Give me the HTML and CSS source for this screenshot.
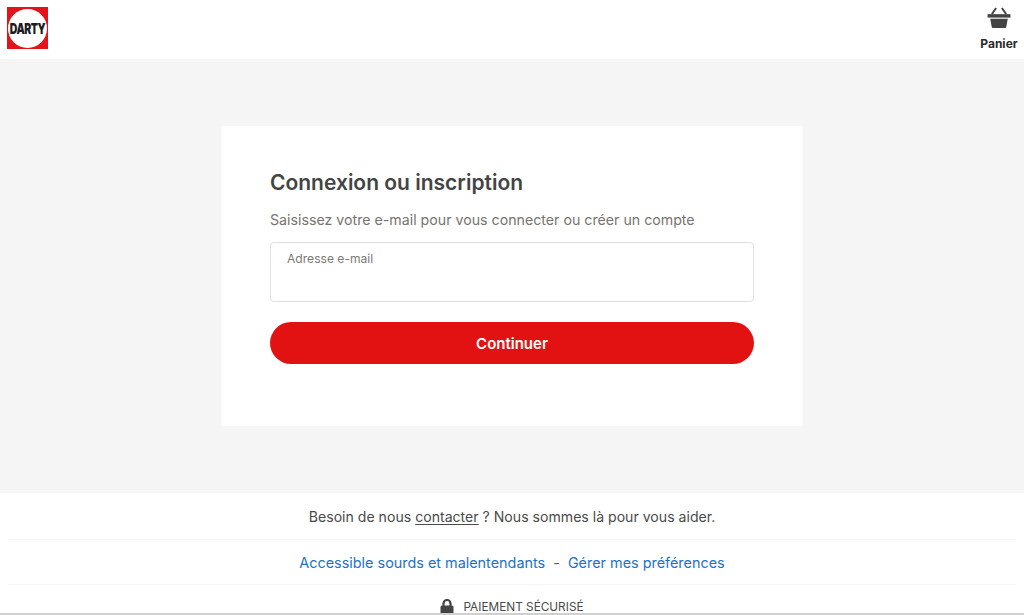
FILE: index.html
```html
<!DOCTYPE html>
<html lang="fr">
<head>
    <meta charset="UTF-8">
    <meta name="viewport" content="width=device-width, initial-scale=1.0">
    <title>Connexion ou inscription</title>
    <link rel="stylesheet" href="styles.css">
</head>
<body>
    <div class="header">
        <a class="logo" href="#">
            <span class="logo-disc"><span class="logo-text">DARTY</span></span>
        </a>
        <a class="basket" href="#">
            <svg class="basket-icon" width="26" height="21" viewBox="0 0 26 22">
                <path d="M10 1 L5.5 7.5 M16 1 L20.5 7.5" fill="none" stroke="#444" stroke-width="2"/>
                <rect x="1" y="7.5" width="24" height="3.6" fill="#444"/>
                <path d="M3.8 12.2 H22.2 L20.6 21 Q20.5 22 19.4 22 H6.6 Q5.5 22 5.4 21 Z" fill="#444"/>
            </svg>
            <span class="basket-label">Panier</span>
        </a>
    </div>

    <div class="main-area">
        <div class="card">
            <h1>Connexion ou inscription</h1>
            <p class="intro">Saisissez votre e-mail pour vous connecter ou créer un compte</p>
            <div class="field">
                <label for="email">Adresse e-mail</label>
                <input id="email" type="email">
            </div>
            <button class="continue-button">Continuer</button>
        </div>
    </div>

    <div class="footer">
        <div class="footer-row">Besoin de nous <a class="contact" href="#">contacter</a> ? Nous sommes là pour vous aider.</div>
        <div class="footer-row links">
            <a href="#">Accessible sourds et malentendants</a>
            <span class="sep">-</span>
            <a href="#">Gérer mes préférences</a>
        </div>
        <div class="secure">
            <svg width="14" height="16" viewBox="0 0 14 16">
                <path d="M3.5 7 V4.5 a3.5 3.5 0 0 1 7 0 V7" fill="none" stroke="#444" stroke-width="2.2"/>
                <rect x="0.5" y="6.5" width="13" height="9.5" rx="1.5" fill="#444"/>
            </svg>
            <span>PAIEMENT SÉCURISÉ</span>
        </div>
    </div>
</body>
</html>
```

FILE: styles.css
```css
* {
    margin: 0;
    padding: 0;
    box-sizing: border-box;
}

html, body {
    height: 615px;
    overflow: hidden;
}

body {
    font-family: Inter, "Open Sans", sans-serif;
    background: white;
    color: #444;
    position: relative;
}

body:after {
    content: "";
    position: absolute;
    left: 0;
    right: 0;
    bottom: 0;
    height: 2px;
    background: #d0d0d0;
}

a {
    color: inherit;
    text-decoration: none;
}

.header {
    height: 59px;
    display: flex;
    align-items: flex-start;
    justify-content: space-between;
    padding: 7px 6px 0 7px;
}

.logo {
    width: 41px;
    height: 42px;
    background: #e2131a;
    display: flex;
    align-items: center;
    justify-content: center;
}

.logo-disc {
    width: 39px;
    height: 39px;
    border-radius: 50%;
    background: white;
    display: flex;
    align-items: center;
    justify-content: center;
}

.logo-text {
    font-family: Inter, sans-serif;
    font-size: 10.5px;
    font-weight: 900;
    color: #1c1c1c;
    letter-spacing: -0.5px;
    transform: scaleY(1.45);
}

.basket {
    display: flex;
    flex-direction: column;
    align-items: center;
    width: 38px;
}

.basket-icon {
    display: block;
    margin-bottom: 8px;
}

.basket-label {
    font-size: 12px;
    font-weight: 700;
    line-height: 15px;
    color: #2a2a2a;
}

.main-area {
    height: 434px;
    background: #f5f5f5;
    padding-top: 67px;
}

.card {
    width: 582px;
    height: 300px;
    margin-left: 221px;
    padding: 42px 49px 0;
    background: white;
    border-radius: 2px;
}

.card h1 {
    font-size: 21px;
    font-weight: 600;
    line-height: 29px;
    color: #444;
}

.intro {
    margin-top: 13px;
    font-size: 14.2px;
    line-height: 20px;
    color: #77736f;
}

.field {
    margin-top: 12px;
    height: 60px;
    border: 1px solid #e0e0e0;
    border-radius: 4px;
    padding: 8px 16px 0;
}

.field label {
    display: block;
    font-size: 12.1px;
    line-height: 16px;
    color: #7d7975;
}

.field input {
    display: block;
    width: 100%;
    height: 24px;
    border: none;
    outline: none;
    font-family: inherit;
    font-size: 14px;
}

.continue-button {
    display: block;
    width: 100%;
    height: 42px;
    margin-top: 20px;
    background: #e31212;
    color: white;
    border: none;
    border-radius: 21px;
    font-family: inherit;
    font-size: 15px;
    font-weight: 600;
}

.footer {
    height: 122px;
    padding: 0 8px;
    text-align: center;
}

.footer-row {
    height: 47px;
    line-height: 47px;
    font-size: 14.1px;
    border-bottom: 1px solid #f6f6f6;
    color: #4a4a4a;
}

.contact {
    text-decoration: underline;
    text-underline-offset: 2px;
}

.links {
    color: #1e72c8;
    height: 45px;
    line-height: 45px;
    font-size: 14.4px;
}

.sep {
    color: #555;
    margin: 0 4px;
}

.secure {
    display: flex;
    align-items: center;
    justify-content: center;
    gap: 9px;
    margin-top: 14px;
    font-size: 11.8px;
    line-height: 16px;
    color: #4a4a4a;
}
```
